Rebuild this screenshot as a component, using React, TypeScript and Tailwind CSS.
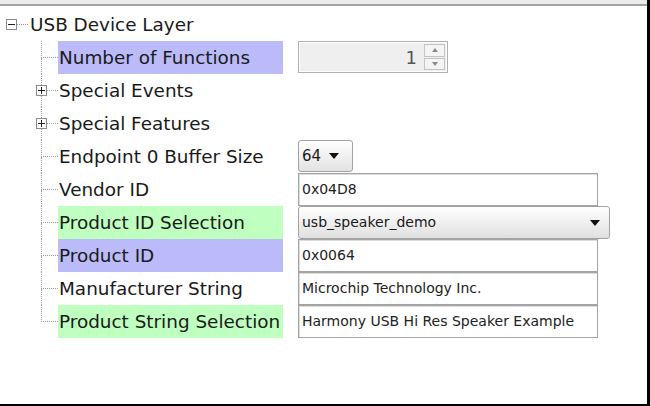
import React from "react";

const labelFont = { fontFamily: '"DejaVu Sans", Verdana, sans-serif' };

function ExpBox({ plus }: { plus: boolean }) {
  return (
    <div className="w-[11px] h-[11px] border border-[#8a8a8a] bg-white relative flex items-center justify-center">
      <div className="w-[7px] h-[1px] bg-[#202020]" />
      {plus && <div className="absolute w-[1px] h-[7px] bg-[#202020]" />}
    </div>
  );
}

function TreeConnector({ last, expander }: { last?: boolean; expander?: boolean }) {
  return (
    <div className="ml-[41px] w-[17px] h-[33px] flex flex-col relative shrink-0">
      <div className="h-[17px] border-l border-b border-dotted border-[#9a9a9a]" />
      <div className={"flex-1 " + (last ? "" : "border-l border-dotted border-[#9a9a9a]")} />
      {expander && (
        <div className="absolute left-[-5px] top-[11px]">
          <ExpBox plus />
        </div>
      )}
    </div>
  );
}

function Label({ text, bg }: { text: string; bg?: string }) {
  return (
    <div
      className={
        "w-[225px] h-[33px] flex items-center pl-[1px] text-[18.4px] text-[#1a1a1a] whitespace-nowrap shrink-0 " +
        (bg ?? "")
      }
      style={labelFont}
    >
      {text}
    </div>
  );
}

function TextField({ value }: { value: string }) {
  return (
    <div
      className="ml-[15px] w-[300px] h-[33px] border border-[#a4a4a4] bg-white flex items-center pl-[3px] text-[14px] text-[#222] shadow-[inset_1px_1px_0_#dcdcdc] whitespace-nowrap"
      style={labelFont}
    >
      {value}
    </div>
  );
}

function Arrow() {
  return (
    <svg width="10" height="6" viewBox="0 0 10 6">
      <path d="M0 0 L10 0 L5 6 Z" fill="#111" />
    </svg>
  );
}

function Row({ children }: { children: React.ReactNode }) {
  return <div className="h-[33px] flex items-center">{children}</div>;
}

export default function App() {
  return (
    <div className="w-[650px] h-[406px] bg-white border-r-[3px] border-b-2 border-black flex flex-col overflow-hidden">
      <div className="h-[4px] bg-[#ececec] shrink-0" />
      <div className="h-[2px] bg-[#a3a3a3] shrink-0" />
      <div className="h-[2px] shrink-0" />

      {/* root */}
      <Row>
        <div className="ml-[6px]">
          <ExpBox plus={false} />
        </div>
        <div className="w-[11px] h-[1px] border-t border-dotted border-[#9a9a9a]" />
        <div className="ml-[2px] text-[18.4px] text-[#1a1a1a]" style={labelFont}>
          USB Device Layer
        </div>
      </Row>

      <Row>
        <TreeConnector />
        <Label text="Number of Functions" bg="bg-[#bbbbfa]" />
        <div className="ml-[15px] w-[150px] h-[32px] self-start border border-[#b0b0b0] bg-white p-[1px] flex">
          <div
            className="flex-1 bg-[#efefef] flex items-center justify-end pr-[6px] text-[18px] text-[#555]"
            style={labelFont}
          >
            1
          </div>
          <div className="w-[23px] flex flex-col gap-[1px] p-[1px] bg-[#efefef]">
            <div className="flex-1 border border-[#c4c4c4] bg-[#f4f4f4] flex items-center justify-center">
              <svg width="6" height="4" viewBox="0 0 6 4">
                <path d="M0 4 L6 4 L3 0 Z" fill="#8a8a8a" />
              </svg>
            </div>
            <div className="flex-1 border border-[#c4c4c4] bg-[#f4f4f4] flex items-center justify-center">
              <svg width="6" height="4" viewBox="0 0 6 4">
                <path d="M0 0 L6 0 L3 4 Z" fill="#8a8a8a" />
              </svg>
            </div>
          </div>
        </div>
      </Row>

      <Row>
        <TreeConnector expander />
        <Label text="Special Events" />
      </Row>

      <Row>
        <TreeConnector expander />
        <Label text="Special Features" />
      </Row>

      <Row>
        <TreeConnector />
        <Label text="Endpoint 0 Buffer Size" />
        <div
          className="ml-[15px] w-[55px] h-[32px] self-start rounded-[3px] border border-[#a2a2a2] bg-gradient-to-b from-white to-[#e2e2e2] flex items-center pl-[3px] gap-[8px] text-[15px] text-[#1a1a1a]"
          style={labelFont}
        >
          <span>64</span>
          <Arrow />
        </div>
      </Row>

      <Row>
        <TreeConnector />
        <Label text="Vendor ID" />
        <TextField value="0x04D8" />
      </Row>

      <Row>
        <TreeConnector />
        <Label text="Product ID Selection" bg="bg-[#bfffbf]" />
        <div
          className="ml-[15px] w-[312px] h-[33px] rounded-[3px] border border-[#a2a2a2] bg-gradient-to-b from-white to-[#e0e0e0] flex items-center justify-between pl-[3px] pr-[9px] text-[14px] text-[#1a1a1a]"
          style={labelFont}
        >
          <span>usb_speaker_demo</span>
          <Arrow />
        </div>
      </Row>

      <Row>
        <TreeConnector />
        <Label text="Product ID" bg="bg-[#bbbbfa]" />
        <TextField value="0x0064" />
      </Row>

      <Row>
        <TreeConnector />
        <Label text="Manufacturer String" />
        <TextField value="Microchip Technology Inc." />
      </Row>

      <Row>
        <TreeConnector last />
        <Label text="Product String Selection" bg="bg-[#bfffbf]" />
        <TextField value="Harmony USB Hi Res Speaker Example" />
      </Row>
    </div>
  );
}
